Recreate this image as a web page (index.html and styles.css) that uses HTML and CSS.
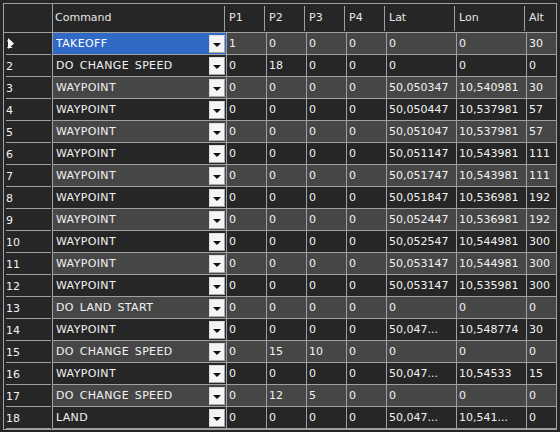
FILE: index.html
```html
<!DOCTYPE html>
<html>
<head>
<meta charset="utf-8">
<link rel="stylesheet" href="styles.css">
</head>
<body>
<div class="grid">
  <div class="row head">
    <div class="c rh"></div>
    <div class="c cmd">Command</div>
    <div class="c p">P1</div>
    <div class="c p">P2</div>
    <div class="c p">P3</div>
    <div class="c p">P4</div>
    <div class="c ll">Lat</div>
    <div class="c ll">Lon</div>
    <div class="c alt">Alt</div>
  </div>
  <div class="row odd">
    <div class="c rh cur">1<svg class="arrow" width="10" height="12" viewBox="0 0 10 12"><path d="M1 0 L7 5.5 L1 11 Z" fill="#fff"/></svg></div>
    <div class="c cmd sel"><span class="name">TAKEOFF</span><i class="dd"></i></div>
    <div class="c p">1</div><div class="c p">0</div><div class="c p">0</div><div class="c p">0</div>
    <div class="c ll">0</div><div class="c ll">0</div><div class="c alt">30</div>
  </div>
  <div class="row">
    <div class="c rh">2</div>
    <div class="c cmd"><span class="name">DO CHANGE SPEED</span><i class="dd"></i></div>
    <div class="c p">0</div><div class="c p">18</div><div class="c p">0</div><div class="c p">0</div>
    <div class="c ll">0</div><div class="c ll">0</div><div class="c alt">0</div>
  </div>
  <div class="row odd">
    <div class="c rh">3</div>
    <div class="c cmd"><span class="name">WAYPOINT</span><i class="dd"></i></div>
    <div class="c p">0</div><div class="c p">0</div><div class="c p">0</div><div class="c p">0</div>
    <div class="c ll">50,050347</div><div class="c ll">10,540981</div><div class="c alt">30</div>
  </div>
  <div class="row">
    <div class="c rh">4</div>
    <div class="c cmd"><span class="name">WAYPOINT</span><i class="dd"></i></div>
    <div class="c p">0</div><div class="c p">0</div><div class="c p">0</div><div class="c p">0</div>
    <div class="c ll">50,050447</div><div class="c ll">10,537981</div><div class="c alt">57</div>
  </div>
  <div class="row odd">
    <div class="c rh">5</div>
    <div class="c cmd"><span class="name">WAYPOINT</span><i class="dd"></i></div>
    <div class="c p">0</div><div class="c p">0</div><div class="c p">0</div><div class="c p">0</div>
    <div class="c ll">50,051047</div><div class="c ll">10,537981</div><div class="c alt">57</div>
  </div>
  <div class="row">
    <div class="c rh">6</div>
    <div class="c cmd"><span class="name">WAYPOINT</span><i class="dd"></i></div>
    <div class="c p">0</div><div class="c p">0</div><div class="c p">0</div><div class="c p">0</div>
    <div class="c ll">50,051147</div><div class="c ll">10,543981</div><div class="c alt">111</div>
  </div>
  <div class="row odd">
    <div class="c rh">7</div>
    <div class="c cmd"><span class="name">WAYPOINT</span><i class="dd"></i></div>
    <div class="c p">0</div><div class="c p">0</div><div class="c p">0</div><div class="c p">0</div>
    <div class="c ll">50,051747</div><div class="c ll">10,543981</div><div class="c alt">111</div>
  </div>
  <div class="row">
    <div class="c rh">8</div>
    <div class="c cmd"><span class="name">WAYPOINT</span><i class="dd"></i></div>
    <div class="c p">0</div><div class="c p">0</div><div class="c p">0</div><div class="c p">0</div>
    <div class="c ll">50,051847</div><div class="c ll">10,536981</div><div class="c alt">192</div>
  </div>
  <div class="row odd">
    <div class="c rh">9</div>
    <div class="c cmd"><span class="name">WAYPOINT</span><i class="dd"></i></div>
    <div class="c p">0</div><div class="c p">0</div><div class="c p">0</div><div class="c p">0</div>
    <div class="c ll">50,052447</div><div class="c ll">10,536981</div><div class="c alt">192</div>
  </div>
  <div class="row">
    <div class="c rh">10</div>
    <div class="c cmd"><span class="name">WAYPOINT</span><i class="dd"></i></div>
    <div class="c p">0</div><div class="c p">0</div><div class="c p">0</div><div class="c p">0</div>
    <div class="c ll">50,052547</div><div class="c ll">10,544981</div><div class="c alt">300</div>
  </div>
  <div class="row odd">
    <div class="c rh">11</div>
    <div class="c cmd"><span class="name">WAYPOINT</span><i class="dd"></i></div>
    <div class="c p">0</div><div class="c p">0</div><div class="c p">0</div><div class="c p">0</div>
    <div class="c ll">50,053147</div><div class="c ll">10,544981</div><div class="c alt">300</div>
  </div>
  <div class="row">
    <div class="c rh">12</div>
    <div class="c cmd"><span class="name">WAYPOINT</span><i class="dd"></i></div>
    <div class="c p">0</div><div class="c p">0</div><div class="c p">0</div><div class="c p">0</div>
    <div class="c ll">50,053147</div><div class="c ll">10,535981</div><div class="c alt">300</div>
  </div>
  <div class="row odd">
    <div class="c rh">13</div>
    <div class="c cmd"><span class="name">DO LAND START</span><i class="dd"></i></div>
    <div class="c p">0</div><div class="c p">0</div><div class="c p">0</div><div class="c p">0</div>
    <div class="c ll">0</div><div class="c ll">0</div><div class="c alt">0</div>
  </div>
  <div class="row">
    <div class="c rh">14</div>
    <div class="c cmd"><span class="name">WAYPOINT</span><i class="dd"></i></div>
    <div class="c p">0</div><div class="c p">0</div><div class="c p">0</div><div class="c p">0</div>
    <div class="c ll">50,047...</div><div class="c ll">10,548774</div><div class="c alt">30</div>
  </div>
  <div class="row odd">
    <div class="c rh">15</div>
    <div class="c cmd"><span class="name">DO CHANGE SPEED</span><i class="dd"></i></div>
    <div class="c p">0</div><div class="c p">15</div><div class="c p">10</div><div class="c p">0</div>
    <div class="c ll">0</div><div class="c ll">0</div><div class="c alt">0</div>
  </div>
  <div class="row">
    <div class="c rh">16</div>
    <div class="c cmd"><span class="name">WAYPOINT</span><i class="dd"></i></div>
    <div class="c p">0</div><div class="c p">0</div><div class="c p">0</div><div class="c p">0</div>
    <div class="c ll">50,047...</div><div class="c ll">10,54533</div><div class="c alt">15</div>
  </div>
  <div class="row odd">
    <div class="c rh">17</div>
    <div class="c cmd"><span class="name">DO CHANGE SPEED</span><i class="dd"></i></div>
    <div class="c p">0</div><div class="c p">12</div><div class="c p">5</div><div class="c p">0</div>
    <div class="c ll">0</div><div class="c ll">0</div><div class="c alt">0</div>
  </div>
  <div class="row">
    <div class="c rh">18</div>
    <div class="c cmd"><span class="name">LAND</span><i class="dd"></i></div>
    <div class="c p">0</div><div class="c p">0</div><div class="c p">0</div><div class="c p">0</div>
    <div class="c ll">50,047...</div><div class="c ll">10,541...</div><div class="c alt">0</div>
  </div>
</div>
</body>
</html>
```
FILE: styles.css
```css
* { box-sizing: border-box; }
html, body { background: #262626; }
body {
  margin: 0;
  padding: 3px 0 0 3px;
  font-family: "DejaVu Sans", Verdana, sans-serif;
  font-size: 11px;
  color: #f2f2f2;
}
.grid {
  width: 554px;
  border: 1px solid #a0a0a0;
}
.row {
  display: flex;
  height: 22px;
}
.row.odd .c { background-color: #464646; }
.c {
  display: flex;
  align-items: center;
  height: 22px;
  padding-left: 2px;
  border-right: 1px solid #a0a0a0;
  border-bottom: 1px solid #a0a0a0;
  white-space: nowrap;
  overflow: hidden;
}
.rh { width: 49px; padding-left: 2px; }
.cmd { width: 174px; padding-left: 3px; }
.p { width: 40px; }
.ll { width: 70px; }
.alt { width: 29px; border-right: none; }

.row .rh, .row.odd .rh {
  position: relative;
  border-bottom: none;
  background: linear-gradient(#a0a0a0, #a0a0a0) no-repeat 2px 100% / 45px 1px, #262626;
}
.arrow { position: absolute; left: 3px; top: 5px; }

.row.odd .sel, .sel { background-color: #3169c6; color: #fff; }
.name { flex: 1; letter-spacing: 0.35px; word-spacing: 2px; overflow: hidden; }
.dd {
  align-self: flex-start;
  margin: 2px 1px 0 0;
  width: 16px;
  height: 18px;
  flex: none;
  background: #f4f4f4;
  border: 1px solid #dcdcdc;
  border-right-color: #a8a8a8;
  border-bottom-color: #a8a8a8;
  display: flex;
  align-items: center;
  justify-content: center;
}
.dd::before {
  content: "";
  width: 0;
  height: 0;
  margin-top: 1px;
  border-left: 4px solid transparent;
  border-right: 4px solid transparent;
  border-top: 4px solid #111;
}

.head { height: 29px; border-bottom: 1px solid #a0a0a0; }
.head .c {
  height: 28px;
  border: none;
  color: #e6e6e6;
  padding-left: 2px;
  padding-bottom: 1px;
  background: linear-gradient(#a0a0a0, #a0a0a0) no-repeat right 2px top 2px / 1px 25px;
}
.head .rh { border-right: 1px solid #a0a0a0; background: #262626; }
.head .alt { background: none; }
```
